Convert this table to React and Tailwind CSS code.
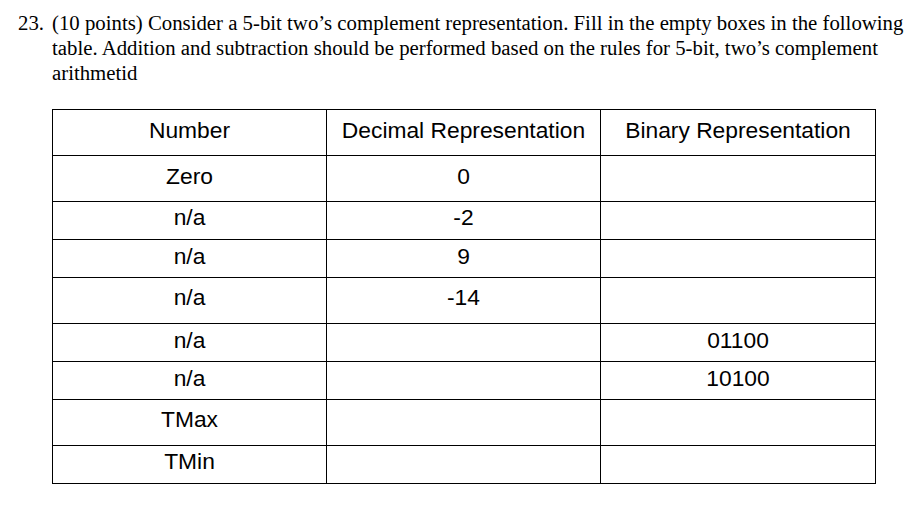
export default function App() {
  const rows = [
    { a: "Number", b: "Decimal Representation", c: "Binary Representation", h: "h-[45px]", pt: "pt-[7px]" },
    { a: "Zero", b: "0", c: "", h: "h-[45px]", pt: "pt-[7px]" },
    { a: "n/a", b: "-2", c: "", h: "h-[37px]", pt: "pt-[2px]" },
    { a: "n/a", b: "9", c: "", h: "h-[37px]", pt: "pt-[3px]" },
    { a: "n/a", b: "-14", c: "", h: "h-[45px]", pt: "pt-[6px]" },
    { a: "n/a", b: "", c: "01100", h: "h-[37px]", pt: "pt-[3px]" },
    { a: "n/a", b: "", c: "10100", h: "h-[37px]", pt: "pt-[3px]" },
    { a: "TMax", b: "", c: "", h: "h-[45px]", pt: "pt-[6px]" },
    { a: "TMin", b: "", c: "", h: "h-[37px]", pt: "pt-[2px]" },
  ];
  return (
    <div className="w-[918px] h-[507px] bg-white text-black overflow-hidden">
      <div className="flex pt-[10px] text-[20.8px] leading-[25px] font-['Liberation_Serif','Times_New_Roman',serif]">
        <div className="w-[52px] shrink-0 pl-[18px]">23.</div>
        <p className="w-[862px]">
          (10 points) Consider a 5-bit two’s complement representation. Fill in the empty boxes in the following
          table. Addition and subtraction should be performed based on the rules for 5-bit, two’s complement
          arithmetid
        </p>
      </div>
      <div className="ml-[52px] mt-[24px] w-[824px] border border-black flex flex-col font-['Liberation_Sans',Arial,sans-serif] text-[22.8px] leading-[26px]">
        {rows.map((r, i) => (
          <div
            key={i}
            className={`grid grid-cols-[273px_274px_275px] ${i > 0 ? "border-t border-black" : ""}`}
          >
            <div className={`${r.h} ${r.pt} text-center`}>{r.a}</div>
            <div className={`${r.h} ${r.pt} text-center border-l border-black`}>{r.b}</div>
            <div className={`${r.h} ${r.pt} text-center border-l border-black`}>{r.c}</div>
          </div>
        ))}
      </div>
    </div>
  );
}
